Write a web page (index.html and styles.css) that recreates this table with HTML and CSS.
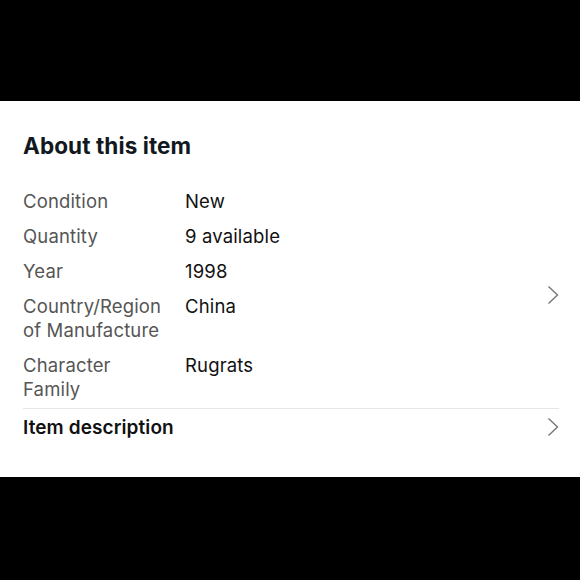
FILE: index.html
```html
<!DOCTYPE html>
<html>
<head>
<meta charset="utf-8">
<link rel="stylesheet" href="styles.css">
</head>
<body>
<section class="card">
  <h2 class="title">About this item</h2>
  <div class="specs">
    <dl class="list">
      <div class="row"><dt>Condition</dt><dd>New</dd></div>
      <div class="row"><dt>Quantity</dt><dd>9 available</dd></div>
      <div class="row"><dt>Year</dt><dd>1998</dd></div>
      <div class="row"><dt>Country/Region of Manufacture</dt><dd>China</dd></div>
      <div class="row"><dt>Character Family</dt><dd>Rugrats</dd></div>
    </dl>
    <svg class="chev" width="12" height="20" viewBox="0 0 12 20"><path d="M1.5 1.5 L10.5 10 L1.5 18.5" fill="none" stroke="#767676" stroke-width="1.4"/></svg>
  </div>
  <div class="desc">
    <span class="desc-label">Item description</span>
    <svg class="chev" width="12" height="20" viewBox="0 0 12 20"><path d="M1.5 1.5 L10.5 10 L1.5 18.5" fill="none" stroke="#767676" stroke-width="1.4"/></svg>
  </div>
</section>
</body>
</html>
```
FILE: styles.css
```css
html, body { margin: 0; padding: 0; background: #000; }
body { font-family: Inter, "Noto Sans", sans-serif; }
.card {
  margin-top: 101px;
  height: 376px;
  background: #fff;
  padding: 0 21px 0 23px;
  box-sizing: border-box;
}
.title {
  margin: 0;
  padding-top: 31px;
  font-size: 22.5px;
  font-weight: 700;
  color: #111820;
  line-height: 28px;
  letter-spacing: 0.1px;
}
.specs {
  display: flex;
  align-items: center;
  margin-top: 29px;
  padding-bottom: 7px;
  border-bottom: 1px solid #e6e6e6;
}
.list { flex: 1; margin: 0; display: flex; flex-direction: column; gap: 11px; }
.row { display: flex; font-size: 18.5px; line-height: 24px; letter-spacing: 0.15px; }
.row dt { width: 145px; margin-right: 17px; color: #555; }
.row dd { margin: 0; color: #111; }
.chev { flex: none; }
.desc {
  display: flex;
  align-items: center;
  justify-content: space-between;
  height: 36px;
}
.desc-label { font-size: 19px; font-weight: 600; color: #111; letter-spacing: 0.1px; }
```
